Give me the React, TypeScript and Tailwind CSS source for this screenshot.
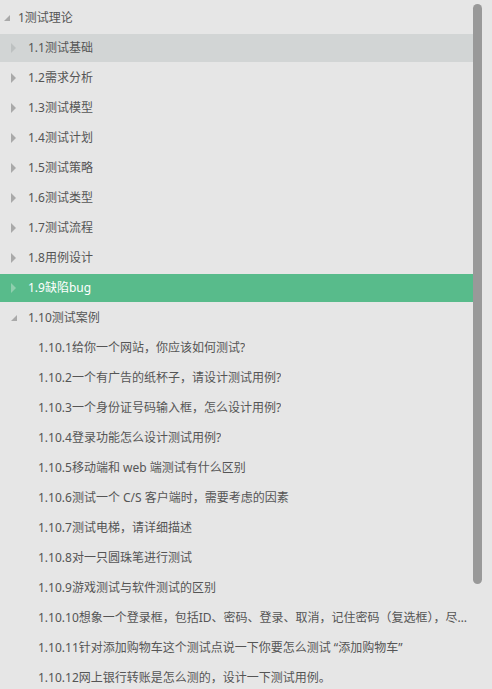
type Node = {
  label: string;
  level: number;
  state?: "open" | "closed";
  tone?: "hover" | "active";
};

const nodes: Node[] = [
  { label: "1测试理论", level: 0, state: "open" },
  { label: "1.1测试基础", level: 1, state: "closed", tone: "hover" },
  { label: "1.2需求分析", level: 1, state: "closed" },
  { label: "1.3测试模型", level: 1, state: "closed" },
  { label: "1.4测试计划", level: 1, state: "closed" },
  { label: "1.5测试策略", level: 1, state: "closed" },
  { label: "1.6测试类型", level: 1, state: "closed" },
  { label: "1.7测试流程", level: 1, state: "closed" },
  { label: "1.8用例设计", level: 1, state: "closed" },
  { label: "1.9缺陷bug", level: 1, state: "closed", tone: "active" },
  { label: "1.10测试案例", level: 1, state: "open" },
  { label: "1.10.1给你一个网站，你应该如何测试?", level: 2 },
  { label: "1.10.2一个有广告的纸杯子，请设计测试用例?", level: 2 },
  { label: "1.10.3一个身份证号码输入框，怎么设计用例?", level: 2 },
  { label: "1.10.4登录功能怎么设计测试用例?", level: 2 },
  { label: "1.10.5移动端和 web 端测试有什么区别", level: 2 },
  { label: "1.10.6测试一个 C/S 客户端时，需要考虑的因素", level: 2 },
  { label: "1.10.7测试电梯，请详细描述", level: 2 },
  { label: "1.10.8对一只圆珠笔进行测试", level: 2 },
  { label: "1.10.9游戏测试与软件测试的区别", level: 2 },
  {
    label:
      "1.10.10想象一个登录框，包括ID、密码、登录、取消，记住密码（复选框），尽可能多的测试用例",
    level: 2,
  },
  { label: "1.10.11针对添加购物车这个测试点说一下你要怎么测试 “添加购物车”", level: 2 },
  { label: "1.10.12网上银行转账是怎么测的，设计一下测试用例。", level: 2 },
];

const Arrow = ({ state, tone }: { state?: "open" | "closed"; tone?: string }) => {
  if (!state) return <span className="w-[10px] shrink-0" />;
  const color = tone === "active" ? "#8fcfae" : tone === "hover" ? "#bdc1c1" : "#a9a9a9";
  if (state === "closed") {
    return (
      <svg width="10" height="10" viewBox="0 0 10 10" className="shrink-0">
        <path d="M1 0 L6 5 L1 10 Z" fill={color} />
      </svg>
    );
  }
  return (
    <svg width="10" height="10" viewBox="0 0 10 10" className="shrink-0">
      <path d="M1 8 L7 2 L7 8 Z" fill="#a9a9a9" />
    </svg>
  );
};

const indent = ["pl-[3px] gap-[5px]", "pl-[10px] gap-[8px]", "pl-[28px] gap-0"];

export default function App() {
  return (
    <div
      className="flex h-[689px] w-[492px] overflow-hidden bg-[#e6e6e6] text-[12px] text-[#555]"
      style={{ fontFamily: '"Noto Sans", "Noto Sans CJK SC", sans-serif' }}
    >
      <div className="flex w-[475px] flex-col gap-[2px] pt-1">
        {nodes.map((n, i) => (
          <div
            key={i}
            className={[
              "flex h-[28px] shrink-0 items-center",
              indent[n.level],
              n.tone === "active"
                ? "bg-[#58bb8b] text-white"
                : n.tone === "hover"
                  ? "bg-[#d2d5d5]"
                  : "",
            ].join(" ")}
          >
            <Arrow state={n.state} tone={n.tone} />
            <span className="min-w-0 truncate">{n.label}</span>
          </div>
        ))}
      </div>
      <div className="-ml-[2px] pt-1">
        <div className="h-[580px] w-[9px] rounded-full bg-[#999]" />
      </div>
    </div>
  );
}
